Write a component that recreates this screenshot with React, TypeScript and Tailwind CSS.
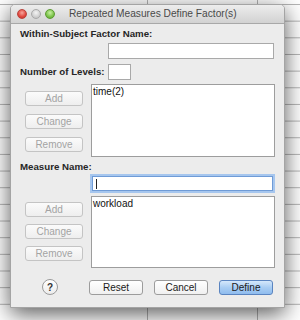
const font = { fontFamily: '"Liberation Sans", Arial, sans-serif' };

const SideButton = ({ label }: { label: string }) => (
  <div className="flex h-[15px] w-[58px] items-center justify-center rounded-[3px] border border-[#c4c4c4] bg-[linear-gradient(to_bottom,#fbfbfb,#eeeeee)] text-[10px] text-[#a3a3a3]">
    {label}
  </div>
);

const ActionButton = ({ label, primary }: { label: string; primary?: boolean }) => (
  <div
    className={
      primary
        ? "flex h-[15px] w-[54px] items-center justify-center rounded-[3px] border border-[#5a84c0] bg-[linear-gradient(to_bottom,#d5e8fb,#a9cdf3_50%,#8fbcee)] text-[10px] text-[#1a1a1a]"
        : "flex h-[15px] w-[54px] items-center justify-center rounded-[3px] border border-[#9c9c9c] bg-[linear-gradient(to_bottom,#ffffff,#f0f0f0)] text-[10px] text-[#1a1a1a]"
    }
  >
    {label}
  </div>
);

const Light = ({ color }: { color: string }) => (
  <div className={`h-[10px] w-[10px] rounded-full border ${color}`} />
);

export default function App() {
  return (
    <div
      style={font}
      className="h-[320px] w-[300px] overflow-hidden bg-white pl-[10px] pt-[4px] [background-image:linear-gradient(to_bottom,#b4b4b4_1px,transparent_1px),linear-gradient(to_right,#b4b4b4_1px,transparent_1px)] [background-position:37px_4px] [background-size:55px_16.67px]"
    >
      <div className="flex h-[304px] w-[275px] flex-col overflow-hidden rounded-t-[5px] border border-[#a4a4a4] bg-[#ececec] shadow-[0_6px_22px_rgba(0,0,0,0.65)]">
        {/* title bar */}
        <div className="flex h-[19px] shrink-0 items-center border-b border-[#a8a8a8] bg-[linear-gradient(to_bottom,#ededed,#d2d2d2)] pl-[6px]">
          <div className="flex gap-[4px]">
            <Light color="border-[#b8443d] bg-[radial-gradient(circle_at_50%_35%,#f7a59c,#e0463d_60%,#b93128)]" />
            <Light color="border-[#a9a9a9] bg-[radial-gradient(circle_at_50%_35%,#f4f4f4,#d0d0d0_60%,#b8b8b8)]" />
            <Light color="border-[#5d9a34] bg-[radial-gradient(circle_at_50%_35%,#c9f0a4,#7cc34a_60%,#56a02c)]" />
          </div>
          <div className="ml-[14px] text-[10.2px] text-[#4a4a4a]">Repeated Measures Define Factor(s)</div>
        </div>

        {/* content */}
        <div className="flex flex-col pl-[9px] pr-[9px]">
          <div className="mt-[4px] h-[12px] text-[9.7px] font-bold leading-[12px] text-[#262626]">Within-Subject Factor Name:</div>
          <div className="ml-[88px] mt-[3px] h-[16px] w-[166px] border border-[#a9a9a9] bg-white" />

          <div className="mt-[5px] flex items-center">
            <div className="w-[88px] text-[9.7px] font-bold text-[#262626]">Number of Levels:</div>
            <div className="h-[16px] w-[23px] border border-[#a9a9a9] bg-white" />
          </div>

          <div className="mt-[4px] flex">
            <div className="ml-[5px] mt-[7px] flex flex-col gap-[8px]">
              <SideButton label="Add" />
              <SideButton label="Change" />
              <SideButton label="Remove" />
            </div>
            <div className="ml-[8px] h-[73px] w-[185px] border border-[#9d9d9d] bg-white pl-[1px] text-[10px] leading-[13px] text-[#111]">
              time(2)
            </div>
          </div>

          <div className="mt-[3px] h-[13px] text-[9.7px] font-bold leading-[13px] text-[#262626]">Measure Name:</div>
          <div className="ml-[72px] mt-[3px] flex h-[15px] w-[181px] items-center border border-[#6f9bd6] bg-white pl-[3px] shadow-[0_0_0_2px_#a6c6ee]">
            <div className="h-[10px] w-[1px] bg-[#222]" />
          </div>

          <div className="mt-[5px] flex">
            <div className="ml-[5px] mt-[6px] flex flex-col gap-[7px]">
              <SideButton label="Add" />
              <SideButton label="Change" />
              <SideButton label="Remove" />
            </div>
            <div className="ml-[8px] h-[72px] w-[185px] border border-[#9d9d9d] bg-white pl-[1px] text-[10px] leading-[13px] text-[#111]">
              workload
            </div>
          </div>

          <div className="mt-[11px] flex items-center">
            <div className="ml-[22px] flex h-[16px] w-[16px] items-center justify-center rounded-full border border-[#9a9a9a] bg-[linear-gradient(to_bottom,#ffffff,#ececec)] text-[10px] font-bold text-[#333]">
              ?
            </div>
            <div className="ml-[31px] flex gap-[11px]">
              <ActionButton label="Reset" />
              <ActionButton label="Cancel" />
              <ActionButton label="Define" primary />
            </div>
          </div>
        </div>
      </div>
    </div>
  );
}
